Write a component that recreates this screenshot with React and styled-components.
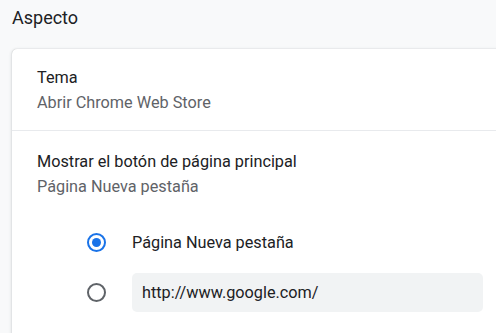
import React from 'react'
import styled, { createGlobalStyle } from 'styled-components'

const GlobalStyle = createGlobalStyle`
  html, body {
    margin: 0;
    padding: 0;
    background: #f8f9fa;
    overflow: hidden;
  }
  body {
    font-family: Roboto, "Liberation Sans", sans-serif;
    color: #202124;
  }
`

const Page = styled.div`
  width: 496px;
  height: 333px;
  overflow: hidden;
`

const Title = styled.h2`
  margin: 0;
  padding: 6px 0 0 12px;
  height: 49px;
  box-sizing: border-box;
  font-size: 18px;
  font-weight: 400;
  line-height: 24px;
  color: #202124;
`

const Card = styled.div`
  margin-left: 12px;
  width: 520px;
  padding-bottom: 40px;
  background: #fff;
  border-radius: 5px;
  box-shadow: 0 0 1px rgba(60, 64, 67, 0.3), 0 1px 3px 1px rgba(60, 64, 67, 0.12);
`

const Row = styled.div`
  display: flex;
  flex-direction: column;
  justify-content: center;
  padding: 0 25px;
  height: ${(p) => p.height}px;
  box-sizing: border-box;
  border-top: ${(p) => (p.divided ? '1px solid #e8eaed' : 'none')};
`

const Primary = styled.div`
  font-size: 16.25px;
  line-height: 25px;
  color: #202124;
`

const Secondary = styled.div`
  font-size: 16.25px;
  line-height: 25px;
  color: #5f6368;
`

const RadioList = styled.div`
  display: flex;
  flex-direction: column;
  padding: 1px 0 0 75px;
`

const RadioRow = styled.label`
  display: flex;
  align-items: center;
  height: 50px;
  gap: 26px;
`

const Radio = styled.span`
  flex: none;
  width: 19px;
  height: 19px;
  box-sizing: border-box;
  border-radius: 50%;
  border: 2px solid ${(p) => (p.checked ? '#1a73e8' : '#5f6368')};
  display: flex;
  align-items: center;
  justify-content: center;

  &::after {
    content: '';
    width: 9px;
    height: 9px;
    border-radius: 50%;
    background: #1a73e8;
    display: ${(p) => (p.checked ? 'block' : 'none')};
  }
`

const RadioLabel = styled.span`
  font-size: 16.25px;
  color: #202124;
`

const UrlInput = styled.div`
  width: 351px;
  height: 39px;
  box-sizing: border-box;
  padding: 0 10px;
  display: flex;
  align-items: center;
  background: #f1f3f4;
  border-radius: 5px;
  font-size: 16.25px;
  color: #202124;
`

export default function App() {
  return (
    <Page>
      <GlobalStyle />
      <Title>Aspecto</Title>
      <Card>
        <Row height={81}>
          <Primary>Tema</Primary>
          <Secondary>Abrir Chrome Web Store</Secondary>
        </Row>
        <Row height={86} divided>
          <Primary>Mostrar el botón de página principal</Primary>
          <Secondary>Página Nueva pestaña</Secondary>
        </Row>
        <RadioList>
          <RadioRow>
            <Radio checked />
            <RadioLabel>Página Nueva pestaña</RadioLabel>
          </RadioRow>
          <RadioRow>
            <Radio />
            <UrlInput>http://www.google.com/</UrlInput>
          </RadioRow>
        </RadioList>
      </Card>
    </Page>
  )
}
